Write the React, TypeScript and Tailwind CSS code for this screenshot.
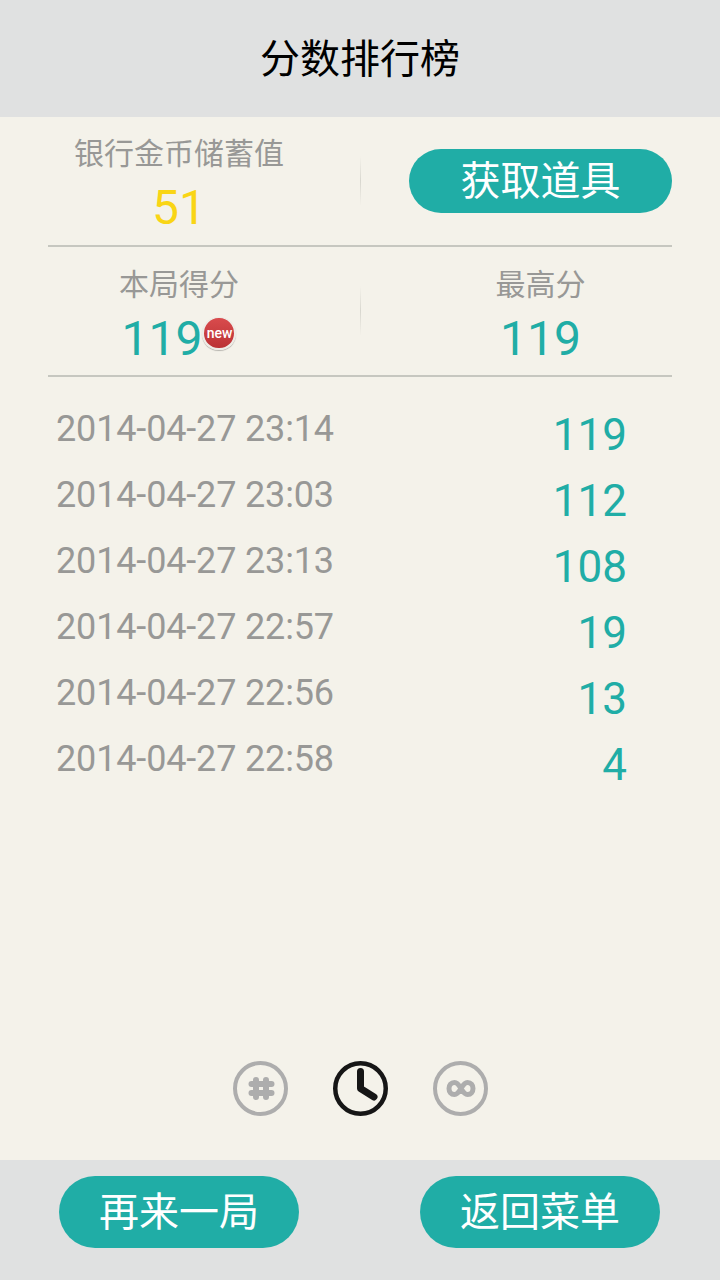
const font = "font-['Roboto','Noto_Sans_CJK_SC',sans-serif]";

const records = [
  { time: "2014-04-27 23:14", score: 119 },
  { time: "2014-04-27 23:03", score: 112 },
  { time: "2014-04-27 23:13", score: 108 },
  { time: "2014-04-27 22:57", score: 19 },
  { time: "2014-04-27 22:56", score: 13 },
  { time: "2014-04-27 22:58", score: 4 },
];

function ModeIcons() {
  return (
    <div className="flex justify-center gap-[45px]">
      <svg width="55" height="55" viewBox="0 0 55 55" fill="none">
        <circle cx="27.5" cy="27.5" r="25.5" stroke="#adadad" strokeWidth="4" />
        <path d="M23 19V36M33 19V36M18.5 23H38.5M18.5 32H38.5" stroke="#adadad" strokeWidth="6" strokeLinecap="round" />
      </svg>
      <svg width="55" height="55" viewBox="0 0 55 55" fill="none">
        <circle cx="27.5" cy="27.5" r="25.25" stroke="#161616" strokeWidth="4.5" />
        <path d="M27.5 10.5V27.5L41 36" stroke="#161616" strokeWidth="7" strokeLinecap="round" strokeLinejoin="round" />
      </svg>
      <svg width="55" height="55" viewBox="0 0 55 55" fill="none">
        <circle cx="27.5" cy="27.5" r="25.5" stroke="#adadad" strokeWidth="4" />
        <path d="M28 27.5C26 24 24 21.5 21.5 21.5C18 21.5 16 24 16 27.5C16 31 18 33.5 21.5 33.5C24 33.5 26 31 28 27.5C30 24 32 21.5 34.5 21.5C38 21.5 40 24 40 27.5C40 31 38 33.5 34.5 33.5C32 33.5 30 31 28 27.5Z" stroke="#adadad" strokeWidth="5" />
      </svg>
    </div>
  );
}

export default function App() {
  return (
    <div className={`w-[720px] h-[1280px] flex flex-col bg-[#f4f2ea] overflow-hidden ${font}`}>
      <header className="h-[117px] shrink-0 bg-[#e0e1e1] flex items-center justify-center pt-[2px] text-[40px] text-black">
        分数排行榜
      </header>

      <main className="flex-1 px-[48px] flex flex-col">
        <section className="h-[130px] flex border-b-2 border-[#c6c7c0]">
          <div className="w-[312px] pt-[17px] pr-[50px] flex flex-col items-center">
            <span className="text-[30px] leading-[40px] text-[#989896]">银行金币储蓄值</span>
            <span className="mt-[6px] text-[48px] leading-[56px] text-[#f9d515]">51</span>
          </div>
          <div className="w-px h-[50px] self-center bg-gradient-to-b from-transparent via-[#d8d7cf] to-transparent" />
          <div className="flex-1 flex justify-end items-center">
            <button className="w-[263px] h-[64px] pt-[2px] rounded-full bg-[#20ada6] text-white text-[40px]">获取道具</button>
          </div>
        </section>

        <section className="h-[130px] flex border-b-2 border-[#c6c7c0]">
          <div className="w-[312px] pt-[18px] pr-[50px] flex flex-col items-center">
            <span className="text-[30px] leading-[40px] text-[#989896]">本局得分</span>
            <div className="mt-[6px] flex items-start">
              <span className="text-[48px] leading-[56px] text-[#20ada6]">119</span>
              <span className="mt-[6px] w-[34px] h-[33px] rounded-full bg-gradient-to-b from-[#d94b4d] to-[#bb3235] border-2 border-t-[1px] border-[#eeece6] shadow-[0_1px_1px_rgba(0,0,0,0.25)] flex items-center justify-center text-[14px] leading-none font-medium text-white">
                new
              </span>
            </div>
          </div>
          <div className="w-px h-[50px] self-center bg-gradient-to-b from-transparent via-[#d8d7cf] to-transparent" />
          <div className="flex-1 pt-[18px] pl-[48px] flex flex-col items-center">
            <span className="text-[30px] leading-[40px] text-[#989896]">最高分</span>
            <span className="mt-[6px] text-[48px] leading-[56px] text-[#20ada6]">119</span>
          </div>
        </section>

        <ul className="pt-[18px] pl-[8px] pr-[45px]">
          {records.map((r) => (
            <li key={r.time} className="h-[66px] flex justify-between">
              <span className="pt-[1px] text-[36px] leading-[66px] tracking-[-0.15px] text-[#989896]">{r.time}</span>
              <span className="pt-[7px] text-[44px] leading-[66px] text-[#20ada6]">{r.score}</span>
            </li>
          ))}
        </ul>

        <div className="mt-auto mb-[44px]">
          <ModeIcons />
        </div>
      </main>

      <footer className="h-[120px] shrink-0 bg-[#e0e1e1] flex items-center justify-between pl-[59px] pr-[60px] pb-[16px]">
        <button className="w-[240px] h-[72px] pt-[2px] rounded-full bg-[#20ada6] text-white text-[40px]">再来一局</button>
        <button className="w-[240px] h-[72px] pt-[2px] rounded-full bg-[#20ada6] text-white text-[40px]">返回菜单</button>
      </footer>
    </div>
  );
}
